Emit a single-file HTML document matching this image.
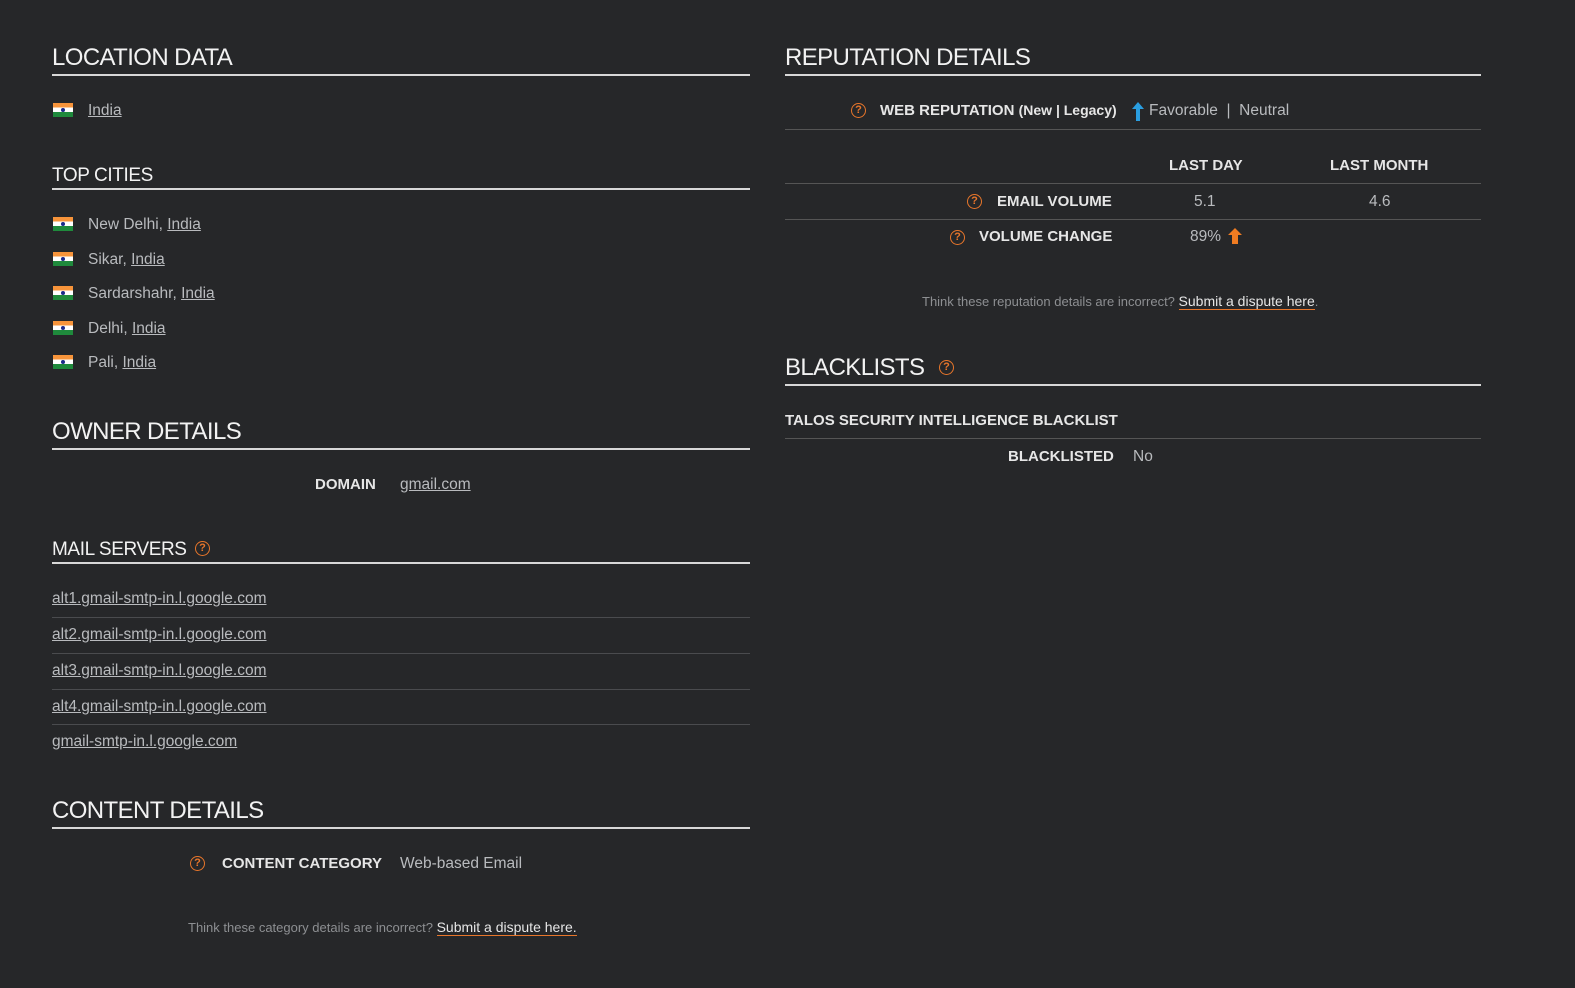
<!DOCTYPE html>
<html><head><meta charset="utf-8"><style>
body{margin:0;width:1575px;height:988px;background:#262729;font-family:"Liberation Sans",sans-serif;color:#b9bbbe;position:relative;overflow:hidden}
.a{position:absolute;white-space:nowrap}
h2{position:absolute;margin:0;font-weight:normal;color:#f2f2f2;font-size:24px;letter-spacing:-0.6px}
h3{position:absolute;margin:0;font-weight:normal;color:#f2f2f2;font-size:19px;letter-spacing:-0.4px}
.hr{position:absolute;height:2px;background:#d8d8d8}
.ln{position:absolute;height:1px;background:#4a4b4e}
a{color:#b9bbbe;text-decoration:underline}
.t{font-size:15.5px}
.b{font-weight:bold;color:#e6e6e6;font-size:15px}
.flag{position:absolute;width:20px;height:14px;background:linear-gradient(#f7943a 0 33%,#fff 33% 66%,#1f8a3c 66%)}
.flag:after{content:"";position:absolute;left:8px;top:5px;width:4px;height:4px;border-radius:50%;background:#1b2a8a}
.q{position:absolute;width:13px;height:13px;border:1.5px solid #e8762b;border-radius:50%;color:#e8762b;font-size:11px;font-weight:bold;text-align:center;line-height:13px}
.u{border-bottom:1px solid #e8762b;text-decoration:none;color:#e6e6e6}
</style></head><body>
<h2 style="left:52px;top:44px">LOCATION DATA</h2><div class="hr" style="left:52px;top:74px;width:698px"></div>
<div class="flag" style="left:53px;top:103px"></div><div class="a t" style="left:88px;top:102px"><a>India</a></div>
<h3 style="left:52px;top:165px">TOP CITIES</h3><div class="hr" style="left:52px;top:188px;width:698px"></div>
<div class="flag" style="left:53px;top:217px"></div><div class="a t" style="left:88px;top:216px">New Delhi, <a>India</a></div>
<div class="flag" style="left:53px;top:252px"></div><div class="a t" style="left:88px;top:251px">Sikar, <a>India</a></div>
<div class="flag" style="left:53px;top:286px"></div><div class="a t" style="left:88px;top:285px">Sardarshahr, <a>India</a></div>
<div class="flag" style="left:53px;top:321px"></div><div class="a t" style="left:88px;top:320px">Delhi, <a>India</a></div>
<div class="flag" style="left:53px;top:355px"></div><div class="a t" style="left:88px;top:354px">Pali, <a>India</a></div>
<h2 style="left:52px;top:418px">OWNER DETAILS</h2><div class="hr" style="left:52px;top:448px;width:698px"></div>
<div class="a b" style="left:315px;top:476px">DOMAIN</div><div class="a t" style="left:400px;top:476px"><a>gmail.com</a></div>
<h3 style="left:52px;top:539px">MAIL SERVERS</h3><div class="q" style="left:195px;top:541px">?</div><div class="hr" style="left:52px;top:562px;width:698px"></div>
<div class="a t" style="left:52px;top:590px"><a>alt1.gmail-smtp-in.l.google.com</a></div><div class="ln" style="left:52px;top:617px;width:698px"></div>
<div class="a t" style="left:52px;top:626px"><a>alt2.gmail-smtp-in.l.google.com</a></div><div class="ln" style="left:52px;top:653px;width:698px"></div>
<div class="a t" style="left:52px;top:662px"><a>alt3.gmail-smtp-in.l.google.com</a></div><div class="ln" style="left:52px;top:689px;width:698px"></div>
<div class="a t" style="left:52px;top:698px"><a>alt4.gmail-smtp-in.l.google.com</a></div><div class="ln" style="left:52px;top:724px;width:698px"></div>
<div class="a t" style="left:52px;top:733px"><a>gmail-smtp-in.l.google.com</a></div>
<h2 style="left:52px;top:797px">CONTENT DETAILS</h2><div class="hr" style="left:52px;top:827px;width:698px"></div>
<div class="q" style="left:190px;top:856px">?</div><div class="a b" style="left:222px;top:855px">CONTENT CATEGORY</div><div class="a t" style="left:400px;top:855px">Web-based Email</div>
<div class="a" style="left:188px;top:919px;font-size:13px;color:#8d8f92">Think these category details are incorrect? <span class="u" style="font-size:14px">Submit a dispute here.</span></div>

<h2 style="left:785px;top:44px">REPUTATION DETAILS</h2><div class="hr" style="left:785px;top:74px;width:696px"></div>
<div class="q" style="left:851px;top:103px">?</div><div class="a b" style="left:880px;top:102px">WEB REPUTATION <span style="font-size:14px">(New | Legacy)</span></div>
<svg class="a" style="left:1131px;top:102px" width="14" height="19" viewBox="0 0 14 19"><path d="M7 0L1 7H5V19H9V7H13Z" fill="#2a9ee0"/></svg>
<div class="a t" style="left:1149px;top:102px">Favorable &nbsp;| &nbsp;Neutral</div>
<div class="ln" style="left:785px;top:129px;width:696px;background:#555"></div>
<div class="a b" style="left:1169px;top:157px">LAST DAY</div><div class="a b" style="left:1330px;top:157px">LAST MONTH</div>
<div class="ln" style="left:785px;top:183px;width:696px;background:#555"></div>
<div class="q" style="left:967px;top:194px">?</div><div class="a b" style="left:997px;top:193px">EMAIL VOLUME</div><div class="a t" style="left:1194px;top:193px">5.1</div><div class="a t" style="left:1369px;top:193px">4.6</div>
<div class="ln" style="left:785px;top:219px;width:696px;background:#555"></div>
<div class="q" style="left:950px;top:230px">?</div><div class="a b" style="left:979px;top:228px">VOLUME CHANGE</div><div class="a t" style="left:1190px;top:228px">89%</div>
<svg class="a" style="left:1228px;top:228px" width="14" height="16" viewBox="0 0 14 16"><path d="M7 0L0 7H4V16H10V7H14Z" fill="#f07c22"/></svg>
<div class="a" style="left:922px;top:293px;font-size:13px;color:#8d8f92">Think these reputation details are incorrect? <span class="u" style="font-size:14px">Submit a dispute here</span>.</div>
<h2 style="left:785px;top:354px">BLACKLISTS</h2><div class="q" style="left:939px;top:360px">?</div><div class="hr" style="left:785px;top:384px;width:696px"></div>
<div class="a b" style="left:785px;top:412px">TALOS SECURITY INTELLIGENCE BLACKLIST</div>
<div class="ln" style="left:785px;top:438px;width:696px;background:#555"></div>
<div class="a b" style="left:1008px;top:448px">BLACKLISTED</div><div class="a t" style="left:1133px;top:448px">No</div>
</body></html>
